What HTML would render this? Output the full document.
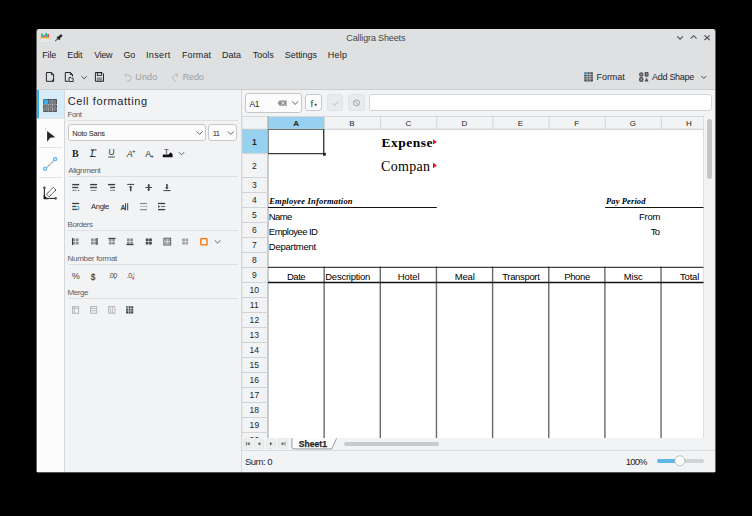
<!DOCTYPE html>
<html><head><meta charset="utf-8"><style>
html,body{margin:0;padding:0}
body{width:752px;height:516px;background:#000;position:relative;overflow:hidden;font-family:"Liberation Sans",sans-serif}
.t{position:absolute;white-space:pre}
</style></head><body>
<div style='position:absolute;left:37px;top:29px;width:678px;height:443px;background:#f2f3f5;border-radius:3px 3px 0 0;box-shadow:1px 0 0 0 rgba(200,202,204,0.5),-1px 0 0 0 rgba(200,202,204,0.5),0 1px 0 0 rgba(200,202,204,0.4)'></div>
<div style='position:absolute;left:37px;top:29px;width:678px;height:60px;background:#dee0e2;border-radius:3px 3px 0 0'></div>
<div style='position:absolute;left:37px;top:89px;width:678px;height:1px;background:#cbcdcf'></div>
<div style='position:absolute;left:37px;top:90px;width:27px;height:382px;background:#fcfcfc'></div>
<div style='position:absolute;left:37px;top:90px;width:27px;height:28px;background:#d7ecf9'></div>
<div style='position:absolute;left:37px;top:90px;width:2px;height:28px;background:#3daee9'></div>
<div style='position:absolute;left:37px;top:118px;width:27px;height:1px;background:#e3e5e7'></div>
<div style='position:absolute;left:39px;top:147px;width:23px;height:1px;background:#e1e2e4'></div>
<div style='position:absolute;left:39px;top:177px;width:23px;height:1px;background:#e1e2e4'></div>
<div style='position:absolute;left:64px;top:90px;width:1px;height:382px;background:#d5d7d9'></div>
<div style='position:absolute;left:241px;top:90px;width:1px;height:382px;background:#d5d7d9'></div>
<div style='position:absolute;left:68px;top:120px;width:170px;height:1px;background:#dddfe1'></div>
<div style='position:absolute;left:68px;top:176px;width:170px;height:1px;background:#dddfe1'></div>
<div style='position:absolute;left:68px;top:230px;width:170px;height:1px;background:#dddfe1'></div>
<div style='position:absolute;left:68px;top:264px;width:170px;height:1px;background:#dddfe1'></div>
<div style='position:absolute;left:68px;top:298px;width:170px;height:1px;background:#dddfe1'></div>
<div style='position:absolute;left:68px;top:124px;width:138px;height:17px;background:#fcfcfc;border:1px solid #c6c8ca;border-radius:3px;box-sizing:border-box'></div>
<div style='position:absolute;left:208px;top:124px;width:29px;height:17px;background:#fcfcfc;border:1px solid #c6c8ca;border-radius:3px;box-sizing:border-box'></div>
<div style='position:absolute;left:245px;top:93px;width:57px;height:20px;background:#fcfcfc;border:1px solid #c6c8ca;border-radius:3px;box-sizing:border-box'></div>
<div style='position:absolute;left:305px;top:94px;width:17px;height:17px;background:#fcfcfc;border:1px solid #c6c8ca;border-radius:3px;box-sizing:border-box'></div>
<div style='position:absolute;left:327px;top:94px;width:16px;height:17px;background:#e9eaeb;border:1px solid #e1e2e3;border-radius:3px;box-sizing:border-box'></div>
<div style='position:absolute;left:348px;top:94px;width:17px;height:17px;background:#e9eaeb;border:1px solid #e1e2e3;border-radius:3px;box-sizing:border-box'></div>
<div style='position:absolute;left:369px;top:94px;width:343px;height:17px;background:#fff;border:1px solid #d3d5d7;border-radius:3px;box-sizing:border-box'></div>
<div style='position:absolute;left:242px;top:116px;width:462px;height:322px;background:#fff'></div>
<div style='position:absolute;left:242px;top:116px;width:462px;height:13px;background:#f2f3f5'></div>
<div style='position:absolute;left:242px;top:129px;width:26px;height:309px;background:#f2f3f5'></div>
<div style='position:absolute;left:268px;top:116px;width:56px;height:13px;background:#96d1ef'></div>
<div style='position:absolute;left:242px;top:129px;width:26px;height:24px;background:#96d1ef'></div>
<div style='position:absolute;left:704px;top:116px;width:11px;height:322px;background:#f2f3f5'></div>
<div style='position:absolute;left:703px;top:116px;width:1px;height:322px;background:#dcdee0'></div>
<div style='position:absolute;left:707px;top:118.5px;width:5px;height:60.0px;background:#c4c6c8;border-radius:3px'></div>
<div style='position:absolute;left:242px;top:438px;width:473px;height:12px;background:#f2f3f5'></div>
<div style='position:absolute;left:242px;top:450px;width:473px;height:1px;background:#d9dbdd'></div>
<div style='position:absolute;left:344px;top:442px;width:95px;height:4px;background:#c8cacc;border-radius:2px'></div>
<div style='position:absolute;left:656.5px;top:459px;width:47.0px;height:4px;background:#d1d3d5;border-radius:2px'></div>
<div style='position:absolute;left:656.5px;top:459px;width:23.5px;height:4px;background:#5cb7e6;border-radius:2px'></div>
<svg style='position:absolute;left:0;top:0' width='752' height='516' viewBox='0 0 752 516'><line x1='242' y1='116.5' x2='704' y2='116.5' stroke='#d6d8da' stroke-width='1' /><line x1='242' y1='129.25' x2='704' y2='129.25' stroke='#c9cbcd' stroke-width='1' /><line x1='268' y1='116' x2='268' y2='438' stroke='#a9abad' stroke-width='1.2' /><line x1='241.9' y1='116' x2='241.9' y2='438' stroke='#d6d8da' stroke-width='1' /><line x1='324.45' y1='116.5' x2='324.45' y2='129.25' stroke='#d2d4d6' stroke-width='1' /><line x1='380.6' y1='116.5' x2='380.6' y2='129.25' stroke='#d2d4d6' stroke-width='1' /><line x1='436.75' y1='116.5' x2='436.75' y2='129.25' stroke='#d2d4d6' stroke-width='1' /><line x1='492.9' y1='116.5' x2='492.9' y2='129.25' stroke='#d2d4d6' stroke-width='1' /><line x1='549.05' y1='116.5' x2='549.05' y2='129.25' stroke='#d2d4d6' stroke-width='1' /><line x1='605.2' y1='116.5' x2='605.2' y2='129.25' stroke='#d2d4d6' stroke-width='1' /><line x1='661.35' y1='116.5' x2='661.35' y2='129.25' stroke='#d2d4d6' stroke-width='1' /><line x1='242' y1='153.5' x2='268' y2='153.5' stroke='#d2d4d6' stroke-width='1' /><line x1='242' y1='177.5' x2='268' y2='177.5' stroke='#d2d4d6' stroke-width='1' /><line x1='242' y1='192.5' x2='268' y2='192.5' stroke='#d2d4d6' stroke-width='1' /><line x1='242' y1='207.5' x2='268' y2='207.5' stroke='#d2d4d6' stroke-width='1' /><line x1='242' y1='222.5' x2='268' y2='222.5' stroke='#d2d4d6' stroke-width='1' /><line x1='242' y1='237.5' x2='268' y2='237.5' stroke='#d2d4d6' stroke-width='1' /><line x1='242' y1='252.5' x2='268' y2='252.5' stroke='#d2d4d6' stroke-width='1' /><line x1='242' y1='267.5' x2='268' y2='267.5' stroke='#d2d4d6' stroke-width='1' /><line x1='242' y1='282.5' x2='268' y2='282.5' stroke='#d2d4d6' stroke-width='1' /><line x1='242' y1='297.5' x2='268' y2='297.5' stroke='#d2d4d6' stroke-width='1' /><line x1='242' y1='312.5' x2='268' y2='312.5' stroke='#d2d4d6' stroke-width='1' /><line x1='242' y1='327.5' x2='268' y2='327.5' stroke='#d2d4d6' stroke-width='1' /><line x1='242' y1='342.5' x2='268' y2='342.5' stroke='#d2d4d6' stroke-width='1' /><line x1='242' y1='357.5' x2='268' y2='357.5' stroke='#d2d4d6' stroke-width='1' /><line x1='242' y1='372.5' x2='268' y2='372.5' stroke='#d2d4d6' stroke-width='1' /><line x1='242' y1='387.5' x2='268' y2='387.5' stroke='#d2d4d6' stroke-width='1' /><line x1='242' y1='402.5' x2='268' y2='402.5' stroke='#d2d4d6' stroke-width='1' /><line x1='242' y1='417.5' x2='268' y2='417.5' stroke='#d2d4d6' stroke-width='1' /><line x1='242' y1='432.5' x2='268' y2='432.5' stroke='#d2d4d6' stroke-width='1' /><line x1='268' y1='207.5' x2='436.75' y2='207.5' stroke='#111' stroke-width='1' /><line x1='605.2' y1='207.5' x2='703.5' y2='207.5' stroke='#111' stroke-width='1' /><line x1='268' y1='267.3' x2='703.5' y2='267.3' stroke='#111' stroke-width='1' /><line x1='268' y1='282.5' x2='703.5' y2='282.5' stroke='#111' stroke-width='1.3' /><line x1='324.15' y1='267.3' x2='324.15' y2='438' stroke='#6a6a6a' stroke-width='1.4' /><line x1='324.15' y1='266.7' x2='324.15' y2='268' stroke='#222' stroke-width='1.5' /><line x1='324.15' y1='281.8' x2='324.15' y2='283.2' stroke='#111' stroke-width='1.5' /><line x1='380.3' y1='267.3' x2='380.3' y2='438' stroke='#6a6a6a' stroke-width='1.4' /><line x1='380.3' y1='266.7' x2='380.3' y2='268' stroke='#222' stroke-width='1.5' /><line x1='380.3' y1='281.8' x2='380.3' y2='283.2' stroke='#111' stroke-width='1.5' /><line x1='436.45' y1='267.3' x2='436.45' y2='438' stroke='#6a6a6a' stroke-width='1.4' /><line x1='436.45' y1='266.7' x2='436.45' y2='268' stroke='#222' stroke-width='1.5' /><line x1='436.45' y1='281.8' x2='436.45' y2='283.2' stroke='#111' stroke-width='1.5' /><line x1='492.59999999999997' y1='267.3' x2='492.59999999999997' y2='438' stroke='#6a6a6a' stroke-width='1.4' /><line x1='492.59999999999997' y1='266.7' x2='492.59999999999997' y2='268' stroke='#222' stroke-width='1.5' /><line x1='492.59999999999997' y1='281.8' x2='492.59999999999997' y2='283.2' stroke='#111' stroke-width='1.5' /><line x1='548.75' y1='267.3' x2='548.75' y2='438' stroke='#6a6a6a' stroke-width='1.4' /><line x1='548.75' y1='266.7' x2='548.75' y2='268' stroke='#222' stroke-width='1.5' /><line x1='548.75' y1='281.8' x2='548.75' y2='283.2' stroke='#111' stroke-width='1.5' /><line x1='604.9000000000001' y1='267.3' x2='604.9000000000001' y2='438' stroke='#6a6a6a' stroke-width='1.4' /><line x1='604.9000000000001' y1='266.7' x2='604.9000000000001' y2='268' stroke='#222' stroke-width='1.5' /><line x1='604.9000000000001' y1='281.8' x2='604.9000000000001' y2='283.2' stroke='#111' stroke-width='1.5' /><line x1='661.0500000000001' y1='267.3' x2='661.0500000000001' y2='438' stroke='#6a6a6a' stroke-width='1.4' /><line x1='661.0500000000001' y1='266.7' x2='661.0500000000001' y2='268' stroke='#222' stroke-width='1.5' /><line x1='661.0500000000001' y1='281.8' x2='661.0500000000001' y2='283.2' stroke='#111' stroke-width='1.5' /><line x1='268.4' y1='129.5' x2='268.4' y2='153.6' stroke='#8a8a8a' stroke-width='1' /><line x1='268' y1='129.5' x2='324.4' y2='129.5' stroke='#6e6e6e' stroke-width='1' /><line x1='323.7' y1='129.5' x2='323.7' y2='153.6' stroke='#3c3c3c' stroke-width='1.4' /><line x1='268' y1='153.6' x2='324.4' y2='153.6' stroke='#3c3c3c' stroke-width='1.4' /><rect x='323' y='152.9' width='2.8' height='2.8' fill='#1a1a1a'/><polygon points='433,139.3 436.8,141.9 433,144.5' fill='#f41010'/><polygon points='433,162.6 436.8,165.4 433,168.3' fill='#f41010'/><rect x='40.6' y='37.8' width='8.6' height='4.6' fill='#eef0f1' stroke='#cfd3d6' stroke-width='0.5'/><line x1='43.5' y1='38' x2='43.5' y2='42.3' stroke='#d6dadd' stroke-width='0.5' /><line x1='46.5' y1='38' x2='46.5' y2='42.3' stroke='#d6dadd' stroke-width='0.5' /><line x1='40.7' y1='40.1' x2='49.1' y2='40.1' stroke='#d6dadd' stroke-width='0.5' /><rect x='40.6' y='36.8' width='8.6' height='1.6' fill='#f5a623'/><rect x='41' y='33.6' width='1.8' height='3.4' fill='#1fbf9f'/><rect x='43.2' y='35' width='1.6' height='2' fill='#e0405a'/><rect x='45.2' y='33' width='1.8' height='4' fill='#1fbf9f'/><rect x='47.3' y='34' width='1.7' height='3' fill='#e0405a'/><line x1='61' y1='35.6' x2='58.6' y2='38' stroke='#2a2c2f' stroke-width='2.6' stroke-linecap='round'/><line x1='56.9' y1='36.9' x2='59.8' y2='39.8' stroke='#2a2c2f' stroke-width='1.2' /><line x1='58' y1='38.6' x2='55.2' y2='41' stroke='#2a2c2f' stroke-width='1' /><polyline points='677.3,36.3 680.1,39.2 682.9,36.3' fill='none' stroke='#4d4f52' stroke-width='1.1'/><polyline points='690.6,38.7 693.6,35.7 696.6,38.7' fill='none' stroke='#4d4f52' stroke-width='1.1'/><line x1='704.5' y1='35.3' x2='709.7' y2='40' stroke='#4d4f52' stroke-width='1.1' /><line x1='709.7' y1='35.3' x2='704.5' y2='40' stroke='#4d4f52' stroke-width='1.1' /><path d='M46.4,72.5 H51.6 L53.6,74.5 V81.3 H46.4 Z M51.4,72.6 V74.7 H53.5' fill='none' stroke='#232629' stroke-width='1'/><rect x='52.2' y='79.6' width='1.8' height='1.8' fill='#232629'/><path d='M65.3,72.5 H70.5 L72.5,74.5 V76.5 M68.5,81.3 H65.3 V72.5 M70.3,72.6 V74.7 H72.4' fill='none' stroke='#232629' stroke-width='1'/><path d='M69,77.6 H71 L71.6,78.3 H73.2 V81.5 H69 Z' fill='none' stroke='#232629' stroke-width='0.9'/><polyline points='81.5,76.2 84.2,78.8 86.9,76.2' fill='none' stroke='#4d4f52' stroke-width='1'/><path d='M95.4,72.5 H102 L103.5,74 V81.3 H95.4 Z' fill='none' stroke='#232629' stroke-width='1'/><rect x='97.3' y='72.8' width='4.2' height='2.6' fill='none' stroke='#232629' stroke-width='0.9'/><rect x='96.8' y='77.4' width='5.4' height='3.6' fill='#8a8d90'/><path d='M125.2,75.2 H128.3 A2.9,2.9 0 0 1 128.3,81 H127' fill='none' stroke='#b9bcbf' stroke-width='1'/><polyline points='126.4,73.4 124.6,75.2 126.4,77' fill='none' stroke='#b9bcbf' stroke-width='1'/><path d='M178,75.2 A3.3,3.3 0 1 0 176.3,81.3' fill='none' stroke='#b9bcbf' stroke-width='1'/><polyline points='175.8,73.2 178.1,75.3 176,77.2' fill='none' stroke='#b9bcbf' stroke-width='1'/><rect x='584.2' y='72.2' width='8.8' height='9.4' rx='0.8' fill='#4d4f52'/><line x1='587.2' y1='72.2' x2='587.2' y2='81.6' stroke='#dee0e2' stroke-width='0.6' /><line x1='589.9' y1='72.2' x2='589.9' y2='81.6' stroke='#dee0e2' stroke-width='0.6' /><line x1='584.2' y1='74.5' x2='593' y2='74.5' stroke='#dee0e2' stroke-width='0.6' /><line x1='584.2' y1='76.7' x2='593' y2='76.7' stroke='#dee0e2' stroke-width='0.6' /><line x1='584.2' y1='78.9' x2='593' y2='78.9' stroke='#dee0e2' stroke-width='0.6' /><rect x='584.6' y='72.6' width='2.3' height='1.7' fill='#3daee9'/><circle cx='641.3' cy='74.4' r='1.6' fill='#9a9c9f' stroke='#4d4f52' stroke-width='1.3'/><rect x='645.3' y='72.7' width='2.6' height='3.4' rx='0.4' fill='#9a9c9f' stroke='#4d4f52' stroke-width='1.3'/><rect x='639.7' y='77.7' width='3.1' height='3.6' rx='1.2' fill='#9a9c9f' stroke='#4d4f52' stroke-width='1.3'/><polygon points='644.6,81.6 646.6,77.4 648.5,81.6' fill='#4d4f52'/><polyline points='701.3,76 703.8,78.5 706.3,76' fill='none' stroke='#4d4f52' stroke-width='1'/><rect x='43.2' y='99' width='13.8' height='13' rx='1' fill='#404347'/><rect x='44' y='99.8' width='3.6000000000000014' height='4.200000000000003' fill='#7b7e82'/><rect x='44' y='105.2' width='3.6000000000000014' height='3.200000000000003' fill='#7b7e82'/><rect x='44' y='109.6' width='3.6000000000000014' height='1.7000000000000028' fill='#7b7e82'/><rect x='48.8' y='99.8' width='3.200000000000003' height='4.200000000000003' fill='#7b7e82'/><rect x='48.8' y='105.2' width='3.200000000000003' height='3.200000000000003' fill='#7b7e82'/><rect x='48.8' y='109.6' width='3.200000000000003' height='1.7000000000000028' fill='#7b7e82'/><rect x='53.3' y='99.8' width='3.0' height='4.200000000000003' fill='#7b7e82'/><rect x='53.3' y='105.2' width='3.0' height='3.200000000000003' fill='#7b7e82'/><rect x='53.3' y='109.6' width='3.0' height='1.7000000000000028' fill='#7b7e82'/><line x1='43.6' y1='104.6' x2='56.6' y2='104.6' stroke='#ffffff' stroke-width='0.9' stroke-dasharray='1,1'/><line x1='43.6' y1='109' x2='56.6' y2='109' stroke='#ffffff' stroke-width='0.9' stroke-dasharray='1,1'/><line x1='48.2' y1='104.6' x2='48.2' y2='111.6' stroke='#ffffff' stroke-width='0.9' stroke-dasharray='1,1'/><line x1='52.6' y1='104.6' x2='52.6' y2='111.6' stroke='#ffffff' stroke-width='0.9' stroke-dasharray='1,1'/><line x1='52.6' y1='99.6' x2='52.6' y2='104' stroke='#ffffff' stroke-width='0.9' stroke-dasharray='1,1'/><rect x='43.8' y='99.6' width='4.5' height='4.5' fill='#3daee9'/><polygon points='47.1,131 55.3,137.3 50.2,137.8 47.1,141.8' fill='#232629'/><rect x='45.3' y='128.6' width='0.9' height='0.9' fill='#888'/><line x1='46' y1='168.4' x2='54.8' y2='159.6' stroke='#3a3c3e' stroke-width='0.9' stroke-dasharray='0.9,0.4'/><rect x='43.6' y='167.3' width='3' height='3' rx='0.5' fill='#cde9f8' stroke='#3daee9' stroke-width='0.9'/><rect x='53.6' y='157.6' width='3' height='3' rx='0.5' fill='#cde9f8' stroke='#3daee9' stroke-width='0.9'/><line x1='44.4' y1='187.8' x2='44.4' y2='198.8' stroke='#2a2c2e' stroke-width='1.1' /><line x1='44' y1='198.4' x2='55.6' y2='198.4' stroke='#2a2c2e' stroke-width='1.1' /><circle cx='44.4' cy='187.8' r='1.3' fill='#555'/><circle cx='55.6' cy='198.4' r='1.3' fill='#555'/><polygon points='43.6,194.4 43.6,199.2 48.4,199.2' fill='#1a1c1e'/><path d='M46.5,194.2 L53.3,187.3 L56,190 L49,196.8 Z' fill='none' stroke='#2a2c2e' stroke-width='1' stroke-dasharray='1.3,0.4'/><text x='72' y='156.8' font-family='Liberation Serif' font-size='10' font-weight='700' font-style='normal' fill='#232629' >B</text><text x='90.2' y='156.8' font-family='Liberation Serif' font-size='10' font-weight='400' font-style='italic' fill='#232629' >I</text><line x1='90.8' y1='149.9' x2='96.6' y2='149.9' stroke='#232629' stroke-width='0.9' /><line x1='89.8' y1='156.5' x2='95.6' y2='156.5' stroke='#232629' stroke-width='0.9' /><text x='108.6' y='155.3' font-family='Liberation Sans' font-size='8.5' font-weight='400' font-style='normal' fill='#333' >U</text><line x1='108.2' y1='157' x2='115' y2='157' stroke='#232629' stroke-width='0.8' /><text x='126.8' y='156.6' font-family='Liberation Sans' font-size='9' font-weight='400' font-style='italic' fill='#333' >A</text><text x='132.2' y='153.2' font-family='Liberation Sans' font-size='5.5' font-weight='700' font-style='normal' fill='#333' >+</text><text x='145.2' y='156.6' font-family='Liberation Sans' font-size='9' font-weight='400' font-style='normal' fill='#333' >A</text><text x='150.6' y='158.2' font-family='Liberation Sans' font-size='5.5' font-weight='700' font-style='normal' fill='#333' >+</text><text x='164' y='154.2' font-family='Liberation Sans' font-size='8' font-weight='400' font-style='normal' fill='#333' >T</text><polygon points='162.8,157.2 172.6,157.2 172.6,154.2 170.6,152.2 168.6,154.6 162.8,154.6' fill='#111'/><polyline points='178.9,152.2 181.5,154.8 184.1,152.2' fill='none' stroke='#4d4f52' stroke-width='0.9'/><line x1='72.2' y1='184.6' x2='79.2' y2='184.6' stroke='#3a3c3f' stroke-width='1.4' /><line x1='72.2' y1='187.5' x2='78.2' y2='187.5' stroke='#45484b' stroke-width='1.4' /><line x1='72.2' y1='190.4' x2='76.7' y2='190.4' stroke='#8d9093' stroke-width='1.1' /><line x1='90.1' y1='184.6' x2='97.1' y2='184.6' stroke='#3a3c3f' stroke-width='1.4' /><line x1='90.1' y1='187.5' x2='97.1' y2='187.5' stroke='#45484b' stroke-width='1.4' /><line x1='90.6' y1='190.4' x2='96.6' y2='190.4' stroke='#8d9093' stroke-width='1.1' /><line x1='108.1' y1='184.6' x2='115.1' y2='184.6' stroke='#3a3c3f' stroke-width='1.4' /><line x1='110.1' y1='187.5' x2='115.1' y2='187.5' stroke='#45484b' stroke-width='1.4' /><line x1='110.1' y1='190.4' x2='115.1' y2='190.4' stroke='#8d9093' stroke-width='1.1' /><rect x='78' y='190' width='1' height='1' fill='#333'/><line x1='127.2' y1='184.4' x2='134.2' y2='184.4' stroke='#3a3c3f' stroke-width='1' /><line x1='130.7' y1='187.2' x2='130.7' y2='191.2' stroke='#3a3c3f' stroke-width='1.5' /><polygon points='128.9,187.6 130.7,185.6 132.5,187.6' fill='#3a3c3f'/><line x1='145.4' y1='187.5' x2='152' y2='187.5' stroke='#3a3c3f' stroke-width='1' /><line x1='148.7' y1='184.6' x2='148.7' y2='190.6' stroke='#3a3c3f' stroke-width='1.4' /><polygon points='147.2,185.9 148.7,184 150.2,185.9' fill='#3a3c3f'/><polygon points='147.2,189.2 148.7,191.2 150.2,189.2' fill='#3a3c3f'/><line x1='163.5' y1='190.6' x2='170.5' y2='190.6' stroke='#3a3c3f' stroke-width='1' /><line x1='166.9' y1='184' x2='166.9' y2='188' stroke='#3a3c3f' stroke-width='1.5' /><polygon points='165.1,187.6 166.9,189.6 168.7,187.6' fill='#3a3c3f'/><line x1='72.2' y1='203.5' x2='79.2' y2='203.5' stroke='#3a3c3f' stroke-width='1.3' /><line x1='72.2' y1='206.5' x2='76' y2='206.5' stroke='#45484b' stroke-width='1.3' /><line x1='72.2' y1='209.4' x2='77' y2='209.4' stroke='#45484b' stroke-width='1.3' /><path d='M76.2,206.5 H77.6 A1.5,1.5 0 0 1 77.6,209.5 H77' fill='none' stroke='#3daee9' stroke-width='1.1'/><rect x='77.4' y='208.7' width='1.5' height='1.5' fill='#3daee9'/><text x='120.8' y='209.9' font-family='Liberation Sans' font-size='6.5' font-weight='400' font-style='normal' fill='#3a3c3f' stroke='#3a3c3f' stroke-width='0.3'>A</text><line x1='125.6' y1='203.2' x2='125.6' y2='210.2' stroke='#3a3c3f' stroke-width='1' /><line x1='127.7' y1='203.2' x2='127.7' y2='210.2' stroke='#3a3c3f' stroke-width='1' /><line x1='140' y1='203.5' x2='147' y2='203.5' stroke='#8a8d90' stroke-width='1.2' /><line x1='140' y1='206.5' x2='145' y2='206.5' stroke='#b8babd' stroke-width='1' /><line x1='140' y1='209.6' x2='147' y2='209.6' stroke='#8a8d90' stroke-width='1.2' /><polygon points='146.6,205.6 145.2,206.6 146.6,207.6' fill='#8a8d90'/><line x1='158' y1='203.5' x2='165.2' y2='203.5' stroke='#3a3c3f' stroke-width='1.3' /><line x1='161' y1='206.5' x2='165.2' y2='206.5' stroke='#6a6d70' stroke-width='1.1' /><line x1='158' y1='209.6' x2='165.2' y2='209.6' stroke='#3a3c3f' stroke-width='1.3' /><polygon points='158.2,205.2 160.2,206.6 158.2,208' fill='#3a3c3f'/><rect x='72.6' y='238.5' width='2.7' height='2.7' fill='#8d9093'/><rect x='75.9' y='238.5' width='2.7' height='2.7' fill='#8d9093'/><rect x='72.6' y='241.8' width='2.7' height='2.7' fill='#8d9093'/><rect x='75.9' y='241.8' width='2.7' height='2.7' fill='#8d9093'/><line x1='72.5' y1='237.9' x2='72.5' y2='245.1' stroke='#3a3c3e' stroke-width='1.1' /><rect x='91.0' y='238.5' width='2.7' height='2.7' fill='#8d9093'/><rect x='94.30000000000001' y='238.5' width='2.7' height='2.7' fill='#8d9093'/><rect x='91.0' y='241.8' width='2.7' height='2.7' fill='#8d9093'/><rect x='94.30000000000001' y='241.8' width='2.7' height='2.7' fill='#8d9093'/><line x1='97.10000000000001' y1='237.9' x2='97.10000000000001' y2='245.1' stroke='#3a3c3e' stroke-width='1.1' /><rect x='108.89999999999999' y='238.5' width='2.7' height='2.7' fill='#8d9093'/><rect x='112.2' y='238.5' width='2.7' height='2.7' fill='#8d9093'/><rect x='108.89999999999999' y='241.8' width='2.7' height='2.7' fill='#8d9093'/><rect x='112.2' y='241.8' width='2.7' height='2.7' fill='#8d9093'/><line x1='108.3' y1='238.4' x2='115.5' y2='238.4' stroke='#3a3c3e' stroke-width='1.1' /><rect x='127.0' y='238.5' width='2.7' height='2.7' fill='#8d9093'/><rect x='130.3' y='238.5' width='2.7' height='2.7' fill='#8d9093'/><rect x='127.0' y='241.8' width='2.7' height='2.7' fill='#8d9093'/><rect x='130.3' y='241.8' width='2.7' height='2.7' fill='#8d9093'/><line x1='126.4' y1='244.6' x2='133.6' y2='244.6' stroke='#3a3c3e' stroke-width='1.1' /><rect x='145.79999999999998' y='238.5' width='2.7' height='2.7' fill='#45484b'/><rect x='149.1' y='238.5' width='2.7' height='2.7' fill='#45484b'/><rect x='145.79999999999998' y='241.8' width='2.7' height='2.7' fill='#45484b'/><rect x='149.1' y='241.8' width='2.7' height='2.7' fill='#45484b'/><rect x='163.9' y='238.2' width='6.8' height='6.8' fill='none' stroke='#45484b' stroke-width='0.9'/><rect x='164.6' y='238.9' width='2.3' height='2.3' fill='#9a9da0'/><rect x='167.5' y='238.9' width='2.3' height='2.3' fill='#9a9da0'/><rect x='164.6' y='241.8' width='2.3' height='2.3' fill='#9a9da0'/><rect x='167.5' y='241.8' width='2.3' height='2.3' fill='#9a9da0'/><rect x='182.2' y='238.5' width='2.7' height='2.7' fill='#9fa2a5'/><rect x='185.5' y='238.5' width='2.7' height='2.7' fill='#9fa2a5'/><rect x='182.2' y='241.8' width='2.7' height='2.7' fill='#9fa2a5'/><rect x='185.5' y='241.8' width='2.7' height='2.7' fill='#9fa2a5'/><rect x='200.8' y='238.6' width='6.2' height='6.2' rx='0.6' fill='none' stroke='#f67400' stroke-width='1.3'/><polyline points='214.6,240.2 217.6,243.1 220.6,240.2' fill='none' stroke='#4d4f52' stroke-width='0.9'/><text x='71.7' y='279.3' font-family='Liberation Sans' font-size='9' font-weight='400' font-style='normal' fill='#3a3c3e' >%</text><text x='90.8' y='279.6' font-family='Liberation Sans' font-size='8.4' font-weight='400' font-style='normal' fill='#3a3c3e' stroke='#3a3c3e' stroke-width='0.15'>$</text><text x='108.6' y='277.6' font-family='Liberation Sans' font-size='7' font-weight='400' font-style='normal' fill='#444' letter-spacing='-0.6'>.00</text><circle cx='114.8' cy='278.3' r='0.9' fill='#3daee9'/><text x='126.8' y='277.6' font-family='Liberation Sans' font-size='7' font-weight='400' font-style='normal' fill='#444' letter-spacing='-0.6'>.0</text><line x1='133.9' y1='272.6' x2='133.9' y2='277.6' stroke='#9a9da0' stroke-width='0.7' /><rect x='132.2' y='277.4' width='1.8' height='1.8' fill='#e0405a'/><rect x='72.4' y='306.7' width='6.3' height='6.5' fill='none' stroke='#a6a9ac' stroke-width='0.8'/><line x1='72.4' y1='308.4' x2='78.7' y2='308.4' stroke='#a6a9ac' stroke-width='0.7' /><line x1='74.5' y1='306.7' x2='74.5' y2='313' stroke='#a6a9ac' stroke-width='0.7' /><rect x='90.5' y='306.7' width='6.3' height='6.5' fill='none' stroke='#a6a9ac' stroke-width='0.8'/><line x1='90.5' y1='308.4' x2='96.8' y2='308.4' stroke='#a6a9ac' stroke-width='0.7' /><line x1='90.5' y1='310.6' x2='96.8' y2='310.6' stroke='#a6a9ac' stroke-width='0.7' /><rect x='108.60000000000001' y='306.7' width='6.3' height='6.5' fill='none' stroke='#a6a9ac' stroke-width='0.8'/><line x1='110.3' y1='306.7' x2='110.3' y2='313' stroke='#a6a9ac' stroke-width='0.7' /><line x1='112.4' y1='306.7' x2='112.4' y2='313' stroke='#a6a9ac' stroke-width='0.7' /><rect x='126.1' y='306.3' width='7.1' height='7.2' fill='#3e4145'/><line x1='128.5' y1='306.3' x2='128.5' y2='313.5' stroke='#f2f3f4' stroke-width='0.6' /><line x1='130.8' y1='306.3' x2='130.8' y2='313.5' stroke='#f2f3f4' stroke-width='0.6' /><line x1='126.1' y1='308.6' x2='133.2' y2='308.6' stroke='#f2f3f4' stroke-width='0.6' /><line x1='126.1' y1='310.9' x2='133.2' y2='310.9' stroke='#f2f3f4' stroke-width='0.6' /><rect x='126.5' y='306.6' width='1.6' height='1.6' fill='#3daee9'/><polyline points='196.6,131.4 199.6,134.4 202.6,131.4' fill='none' stroke='#4d4f52' stroke-width='0.9'/><polyline points='227.8,131.4 230.8,134.4 233.8,131.4' fill='none' stroke='#4d4f52' stroke-width='0.9'/><path d='M279.6,100.4 H286.6 V105.8 H279.6 L277.6,103.1 Z' fill='#8f9295'/><line x1='281.6' y1='101.6' x2='284.4' y2='104.6' stroke='#fcfcfc' stroke-width='0.8' /><line x1='284.4' y1='101.6' x2='281.6' y2='104.6' stroke='#fcfcfc' stroke-width='0.8' /><polyline points='292.2,101.5 295.1,104.4 298,101.5' fill='none' stroke='#4d4f52' stroke-width='0.9'/><text x='310.4' y='106.5' font-family='Liberation Sans' font-size='9.5' font-weight='400' font-style='normal' fill='#333' >f</text><rect x='314.8' y='103.8' width='1.8' height='1.8' fill='#333'/><polyline points='332.3,103.2 334.4,105.3 338.4,101.2' fill='none' stroke='#b4b7ba' stroke-width='0.9'/><circle cx='356.5' cy='102.9' r='3' fill='none' stroke='#9a9da0' stroke-width='0.9'/><line x1='354.4' y1='100.8' x2='358.6' y2='105' stroke='#9a9da0' stroke-width='0.9' /><rect x='243.5' y='438.6' width='8.400000000000006' height='9.8' rx='2' fill='#eeefef' stroke='#e3e4e5' stroke-width='0.8'/><rect x='254.4' y='438.6' width='9.200000000000017' height='9.8' rx='2' fill='#eeefef' stroke='#e3e4e5' stroke-width='0.8'/><rect x='266.8' y='438.6' width='8.5' height='9.8' rx='2' fill='#eeefef' stroke='#e3e4e5' stroke-width='0.8'/><rect x='278.8' y='438.6' width='8.899999999999977' height='9.8' rx='2' fill='#eeefef' stroke='#e3e4e5' stroke-width='0.8'/><polygon points='249.6,441.9 246.9,443.7 249.6,445.5' fill='#5a5d60'/><line x1='246.3' y1='441.8' x2='246.3' y2='445.6' stroke='#5a5d60' stroke-width='0.8' /><polygon points='260.4,441.9 257.7,443.7 260.4,445.5' fill='#5a5d60'/><polygon points='269.9,441.9 272.6,443.7 269.9,445.5' fill='#5a5d60'/><polygon points='281.6,441.9 284.3,443.7 281.6,445.5' fill='#5a5d60'/><line x1='285' y1='441.8' x2='285' y2='445.6' stroke='#5a5d60' stroke-width='0.8' /><path d='M291.9,438.2 V447 Q291.9,448.9 293.8,448.9 H331.7 L336.6,438.3' fill='#fcfcfc' stroke='#8c8f92' stroke-width='0.9'/><circle cx='679.8' cy='460.8' r='5' fill='#fcfcfc' stroke='#b7b9bb' stroke-width='0.9'/></svg>
<div class=t style='left:346.3px;top:34.0px;font-family:"Liberation Sans";font-size:9px;line-height:9px;font-weight:400;font-style:normal;color:#45484b;letter-spacing:-0.132px'>Calligra Sheets</div>
<div class=t style='left:42.25px;top:50.6px;font-family:"Liberation Sans";font-size:9.0px;line-height:9.0px;font-weight:400;font-style:normal;color:#232629;letter-spacing:-0.167px'>File</div>
<div class=t style='left:67.25px;top:50.6px;font-family:"Liberation Sans";font-size:9.0px;line-height:9.0px;font-weight:400;font-style:normal;color:#232629;letter-spacing:-0.083px'>Edit</div>
<div class=t style='left:94.25px;top:50.6px;font-family:"Liberation Sans";font-size:9.0px;line-height:9.0px;font-weight:400;font-style:normal;color:#232629;letter-spacing:-0.333px'>View</div>
<div class=t style='left:123.5px;top:50.6px;font-family:"Liberation Sans";font-size:9.0px;line-height:9.0px;font-weight:400;font-style:normal;color:#232629;letter-spacing:-0.25px'>Go</div>
<div class=t style='left:146.0px;top:50.6px;font-family:"Liberation Sans";font-size:9.0px;line-height:9.0px;font-weight:400;font-style:normal;color:#232629;letter-spacing:0.35px'>Insert</div>
<div class=t style='left:182.0px;top:50.6px;font-family:"Liberation Sans";font-size:9.0px;line-height:9.0px;font-weight:400;font-style:normal;color:#232629;letter-spacing:0.1px'>Format</div>
<div class=t style='left:222.0px;top:50.6px;font-family:"Liberation Sans";font-size:9.0px;line-height:9.0px;font-weight:400;font-style:normal;color:#232629;letter-spacing:0.0px'>Data</div>
<div class=t style='left:252.75px;top:50.6px;font-family:"Liberation Sans";font-size:9.0px;line-height:9.0px;font-weight:400;font-style:normal;color:#232629;letter-spacing:0.0px'>Tools</div>
<div class=t style='left:284.75px;top:50.6px;font-family:"Liberation Sans";font-size:9.0px;line-height:9.0px;font-weight:400;font-style:normal;color:#232629;letter-spacing:-0.036px'>Settings</div>
<div class=t style='left:327.75px;top:50.6px;font-family:"Liberation Sans";font-size:9.0px;line-height:9.0px;font-weight:400;font-style:normal;color:#232629;letter-spacing:0.25px'>Help</div>
<div class=t style='left:135.25px;top:73.0px;font-family:"Liberation Sans";font-size:9px;line-height:9px;font-weight:400;font-style:normal;color:#9c9fa2;letter-spacing:0.167px'>Undo</div>
<div class=t style='left:182.75px;top:73.0px;font-family:"Liberation Sans";font-size:9px;line-height:9px;font-weight:400;font-style:normal;color:#9c9fa2;letter-spacing:-0.167px'>Redo</div>
<div class=t style='left:596.5px;top:73.1px;font-family:"Liberation Sans";font-size:9px;line-height:9px;font-weight:400;font-style:normal;color:#232629;letter-spacing:-0.05px'>Format</div>
<div class=t style='left:652.0px;top:73.1px;font-family:"Liberation Sans";font-size:9px;line-height:9px;font-weight:400;font-style:normal;color:#232629;letter-spacing:-0.281px'>Add Shape</div>
<div class=t style='left:67.75px;top:95.95px;font-family:"Liberation Sans";font-size:11px;line-height:11px;font-weight:400;font-style:normal;color:#232629;letter-spacing:0.607px'>Cell formatting</div>
<div class=t style='left:67.5px;top:110.65px;font-family:"Liberation Sans";font-size:8px;line-height:8px;font-weight:400;font-style:normal;color:#5d6165;letter-spacing:-0.5px'>Font</div>
<div class=t style='left:68.25px;top:166.95px;font-family:"Liberation Sans";font-size:8px;line-height:8px;font-weight:400;font-style:normal;color:#5d6165;letter-spacing:-0.375px'>Alignment</div>
<div class=t style='left:67.5px;top:220.85px;font-family:"Liberation Sans";font-size:8px;line-height:8px;font-weight:400;font-style:normal;color:#5d6165;letter-spacing:-0.417px'>Borders</div>
<div class=t style='left:67.5px;top:254.5px;font-family:"Liberation Sans";font-size:8px;line-height:8px;font-weight:400;font-style:normal;color:#5d6165;letter-spacing:-0.292px'>Number format</div>
<div class=t style='left:67.5px;top:288.75px;font-family:"Liberation Sans";font-size:8px;line-height:8px;font-weight:400;font-style:normal;color:#5d6165;letter-spacing:-0.438px'>Merge</div>
<div class=t style='left:72.25px;top:129.65px;font-family:"Liberation Sans";font-size:7.5px;line-height:7.5px;font-weight:400;font-style:normal;color:#232629;letter-spacing:-0.281px'>Noto Sans</div>
<div class=t style='left:212.75px;top:129.65px;font-family:"Liberation Sans";font-size:7.5px;line-height:7.5px;font-weight:400;font-style:normal;color:#232629;letter-spacing:-0.5px'>11</div>
<div class=t style='left:91.0px;top:203.0px;font-family:"Liberation Sans";font-size:7.5px;line-height:7.5px;font-weight:400;font-style:normal;color:#232629;letter-spacing:-0.25px'>Angle</div>
<div class=t style='left:249.6px;top:99.75px;font-family:"Liberation Sans";font-size:8.5px;line-height:8.5px;font-weight:400;font-style:normal;color:#232629;letter-spacing:-0.5px'>A1</div>
<div class=t style='left:293.2px;top:119.95px;font-family:"Liberation Sans";font-size:8px;line-height:8px;font-weight:700;font-style:normal;color:#232629;letter-spacing:0px'>A</div>
<div class=t style='left:349.35px;top:119.95px;font-family:"Liberation Sans";font-size:8px;line-height:8px;font-weight:400;font-style:normal;color:#232629;letter-spacing:0px'>B</div>
<div class=t style='left:405.38px;top:119.95px;font-family:"Liberation Sans";font-size:8px;line-height:8px;font-weight:400;font-style:normal;color:#232629;letter-spacing:0px'>C</div>
<div class=t style='left:461.4px;top:119.95px;font-family:"Liberation Sans";font-size:8px;line-height:8px;font-weight:400;font-style:normal;color:#232629;letter-spacing:0px'>D</div>
<div class=t style='left:517.8px;top:119.95px;font-family:"Liberation Sans";font-size:8px;line-height:8px;font-weight:400;font-style:normal;color:#232629;letter-spacing:0px'>E</div>
<div class=t style='left:574.2px;top:119.95px;font-family:"Liberation Sans";font-size:8px;line-height:8px;font-weight:400;font-style:normal;color:#232629;letter-spacing:0px'>F</div>
<div class=t style='left:629.85px;top:119.95px;font-family:"Liberation Sans";font-size:8px;line-height:8px;font-weight:400;font-style:normal;color:#232629;letter-spacing:0px'>G</div>
<div class=t style='left:686.12px;top:119.95px;font-family:"Liberation Sans";font-size:8px;line-height:8px;font-weight:400;font-style:normal;color:#232629;letter-spacing:0px'>H</div>
<div class=t style='left:252.0px;top:138.12px;font-family:"Liberation Sans";font-size:8.5px;line-height:8.5px;font-weight:700;font-style:normal;color:#232629;letter-spacing:0.2px'>1</div>
<div class=t style='left:252.12px;top:162.25px;font-family:"Liberation Sans";font-size:8.5px;line-height:8.5px;font-weight:400;font-style:normal;color:#232629;letter-spacing:0.2px'>2</div>
<div class=t style='left:252.12px;top:180.85px;font-family:"Liberation Sans";font-size:8.5px;line-height:8.5px;font-weight:400;font-style:normal;color:#232629;letter-spacing:0.2px'>3</div>
<div class=t style='left:252.12px;top:195.85px;font-family:"Liberation Sans";font-size:8.5px;line-height:8.5px;font-weight:400;font-style:normal;color:#232629;letter-spacing:0.2px'>4</div>
<div class=t style='left:252.0px;top:210.85px;font-family:"Liberation Sans";font-size:8.5px;line-height:8.5px;font-weight:400;font-style:normal;color:#232629;letter-spacing:0.2px'>5</div>
<div class=t style='left:252.0px;top:225.85px;font-family:"Liberation Sans";font-size:8.5px;line-height:8.5px;font-weight:400;font-style:normal;color:#232629;letter-spacing:0.2px'>6</div>
<div class=t style='left:252.12px;top:240.85px;font-family:"Liberation Sans";font-size:8.5px;line-height:8.5px;font-weight:400;font-style:normal;color:#232629;letter-spacing:0.2px'>7</div>
<div class=t style='left:252.12px;top:255.85px;font-family:"Liberation Sans";font-size:8.5px;line-height:8.5px;font-weight:400;font-style:normal;color:#232629;letter-spacing:0.2px'>8</div>
<div class=t style='left:252.12px;top:270.85px;font-family:"Liberation Sans";font-size:8.5px;line-height:8.5px;font-weight:400;font-style:normal;color:#232629;letter-spacing:0.2px'>9</div>
<div class=t style='left:249.4px;top:285.85px;font-family:"Liberation Sans";font-size:8.5px;line-height:8.5px;font-weight:400;font-style:normal;color:#232629;letter-spacing:0.2px'>10</div>
<div class=t style='left:249.78px;top:300.85px;font-family:"Liberation Sans";font-size:8.5px;line-height:8.5px;font-weight:400;font-style:normal;color:#232629;letter-spacing:0.2px'>11</div>
<div class=t style='left:249.52px;top:315.85px;font-family:"Liberation Sans";font-size:8.5px;line-height:8.5px;font-weight:400;font-style:normal;color:#232629;letter-spacing:0.2px'>12</div>
<div class=t style='left:249.4px;top:330.85px;font-family:"Liberation Sans";font-size:8.5px;line-height:8.5px;font-weight:400;font-style:normal;color:#232629;letter-spacing:0.2px'>13</div>
<div class=t style='left:249.4px;top:345.85px;font-family:"Liberation Sans";font-size:8.5px;line-height:8.5px;font-weight:400;font-style:normal;color:#232629;letter-spacing:0.2px'>14</div>
<div class=t style='left:249.4px;top:360.85px;font-family:"Liberation Sans";font-size:8.5px;line-height:8.5px;font-weight:400;font-style:normal;color:#232629;letter-spacing:0.2px'>15</div>
<div class=t style='left:249.4px;top:375.85px;font-family:"Liberation Sans";font-size:8.5px;line-height:8.5px;font-weight:400;font-style:normal;color:#232629;letter-spacing:0.2px'>16</div>
<div class=t style='left:249.52px;top:390.85px;font-family:"Liberation Sans";font-size:8.5px;line-height:8.5px;font-weight:400;font-style:normal;color:#232629;letter-spacing:0.2px'>17</div>
<div class=t style='left:249.4px;top:405.85px;font-family:"Liberation Sans";font-size:8.5px;line-height:8.5px;font-weight:400;font-style:normal;color:#232629;letter-spacing:0.2px'>18</div>
<div class=t style='left:249.52px;top:420.85px;font-family:"Liberation Sans";font-size:8.5px;line-height:8.5px;font-weight:400;font-style:normal;color:#232629;letter-spacing:0.2px'>19</div>
<div class=t style='clip-path:inset(-20px -20px 6.35px -20px);left:249.52px;top:435.85px;font-family:"Liberation Sans";font-size:8.5px;line-height:8.5px;font-weight:400;font-style:normal;color:#232629;letter-spacing:0.2px'>20</div>
<div class=t style='left:381.55px;top:136.15px;font-family:"Liberation Serif";font-size:13.5px;line-height:13.5px;font-weight:700;font-style:normal;color:#000;letter-spacing:0.492px'>Expense</div>
<div class=t style='left:381.0px;top:159.5px;font-family:"Liberation Serif";font-size:14px;line-height:14px;font-weight:400;font-style:normal;color:#000;letter-spacing:0.3px'>Compan</div>
<div class=t style='left:269.25px;top:197.25px;font-family:"Liberation Serif";font-size:8.5px;line-height:8.5px;font-weight:700;font-style:italic;color:#000;letter-spacing:0.197px'>Employee Information</div>
<div class=t style='left:606.0px;top:197.25px;font-family:"Liberation Serif";font-size:8.5px;line-height:8.5px;font-weight:700;font-style:italic;color:#000;letter-spacing:0.111px'>Pay Period</div>
<div class=t style='left:268.85px;top:212.2px;font-family:"Liberation Sans";font-size:9.5px;line-height:9.5px;font-weight:400;font-style:normal;color:#000;letter-spacing:-0.65px'>Name</div>
<div class=t style='left:268.85px;top:227.2px;font-family:"Liberation Sans";font-size:9.5px;line-height:9.5px;font-weight:400;font-style:normal;color:#000;letter-spacing:-0.525px'>Employee ID</div>
<div class=t style='left:268.85px;top:242.2px;font-family:"Liberation Sans";font-size:9.5px;line-height:9.5px;font-weight:400;font-style:normal;color:#000;letter-spacing:-0.267px'>Department</div>
<div class=t style='left:639.0px;top:212.2px;font-family:"Liberation Sans";font-size:9.5px;line-height:9.5px;font-weight:400;font-style:normal;color:#000;letter-spacing:-0.25px'>From</div>
<div class=t style='left:650.75px;top:227.2px;font-family:"Liberation Sans";font-size:9.5px;line-height:9.5px;font-weight:400;font-style:normal;color:#000;letter-spacing:-0.75px'>To</div>
<div class=t style='left:287.0px;top:272.4px;font-family:"Liberation Sans";font-size:9.5px;line-height:9.5px;font-weight:400;font-style:normal;color:#000;letter-spacing:-0.5px'>Date</div>
<div class=t style='left:325.25px;top:272.4px;font-family:"Liberation Sans";font-size:9.5px;line-height:9.5px;font-weight:400;font-style:normal;color:#000;letter-spacing:-0.25px'>Description</div>
<div class=t style='left:397.75px;top:272.4px;font-family:"Liberation Sans";font-size:9.5px;line-height:9.5px;font-weight:400;font-style:normal;color:#000;letter-spacing:-0.062px'>Hotel</div>
<div class=t style='left:454.75px;top:272.4px;font-family:"Liberation Sans";font-size:9.5px;line-height:9.5px;font-weight:400;font-style:normal;color:#000;letter-spacing:-0.167px'>Meal</div>
<div class=t style='left:502.25px;top:272.4px;font-family:"Liberation Sans";font-size:9.5px;line-height:9.5px;font-weight:400;font-style:normal;color:#000;letter-spacing:-0.344px'>Transport</div>
<div class=t style='left:564.25px;top:272.4px;font-family:"Liberation Sans";font-size:9.5px;line-height:9.5px;font-weight:400;font-style:normal;color:#000;letter-spacing:-0.375px'>Phone</div>
<div class=t style='left:623.75px;top:272.4px;font-family:"Liberation Sans";font-size:9.5px;line-height:9.5px;font-weight:400;font-style:normal;color:#000;letter-spacing:-0.167px'>Misc</div>
<div class=t style='left:680.0px;top:272.4px;font-family:"Liberation Sans";font-size:9.5px;line-height:9.5px;font-weight:400;font-style:normal;color:#000;letter-spacing:-0.188px'>Total</div>
<div class=t style='-webkit-text-stroke:0.25px #232629;left:298.65px;top:439.75px;font-family:"Liberation Sans";font-size:8.5px;line-height:8.5px;font-weight:700;font-style:normal;color:#232629;letter-spacing:0.08px'>Sheet1</div>
<div class=t style='left:245.0px;top:456.8px;font-family:"Liberation Sans";font-size:9.5px;line-height:9.5px;font-weight:400;font-style:normal;color:#232629;letter-spacing:-0.5px'>Sum: 0</div>
<div class=t style='left:625.75px;top:456.8px;font-family:"Liberation Sans";font-size:9.5px;line-height:9.5px;font-weight:400;font-style:normal;color:#232629;letter-spacing:-0.833px'>100%</div>
</body></html>
